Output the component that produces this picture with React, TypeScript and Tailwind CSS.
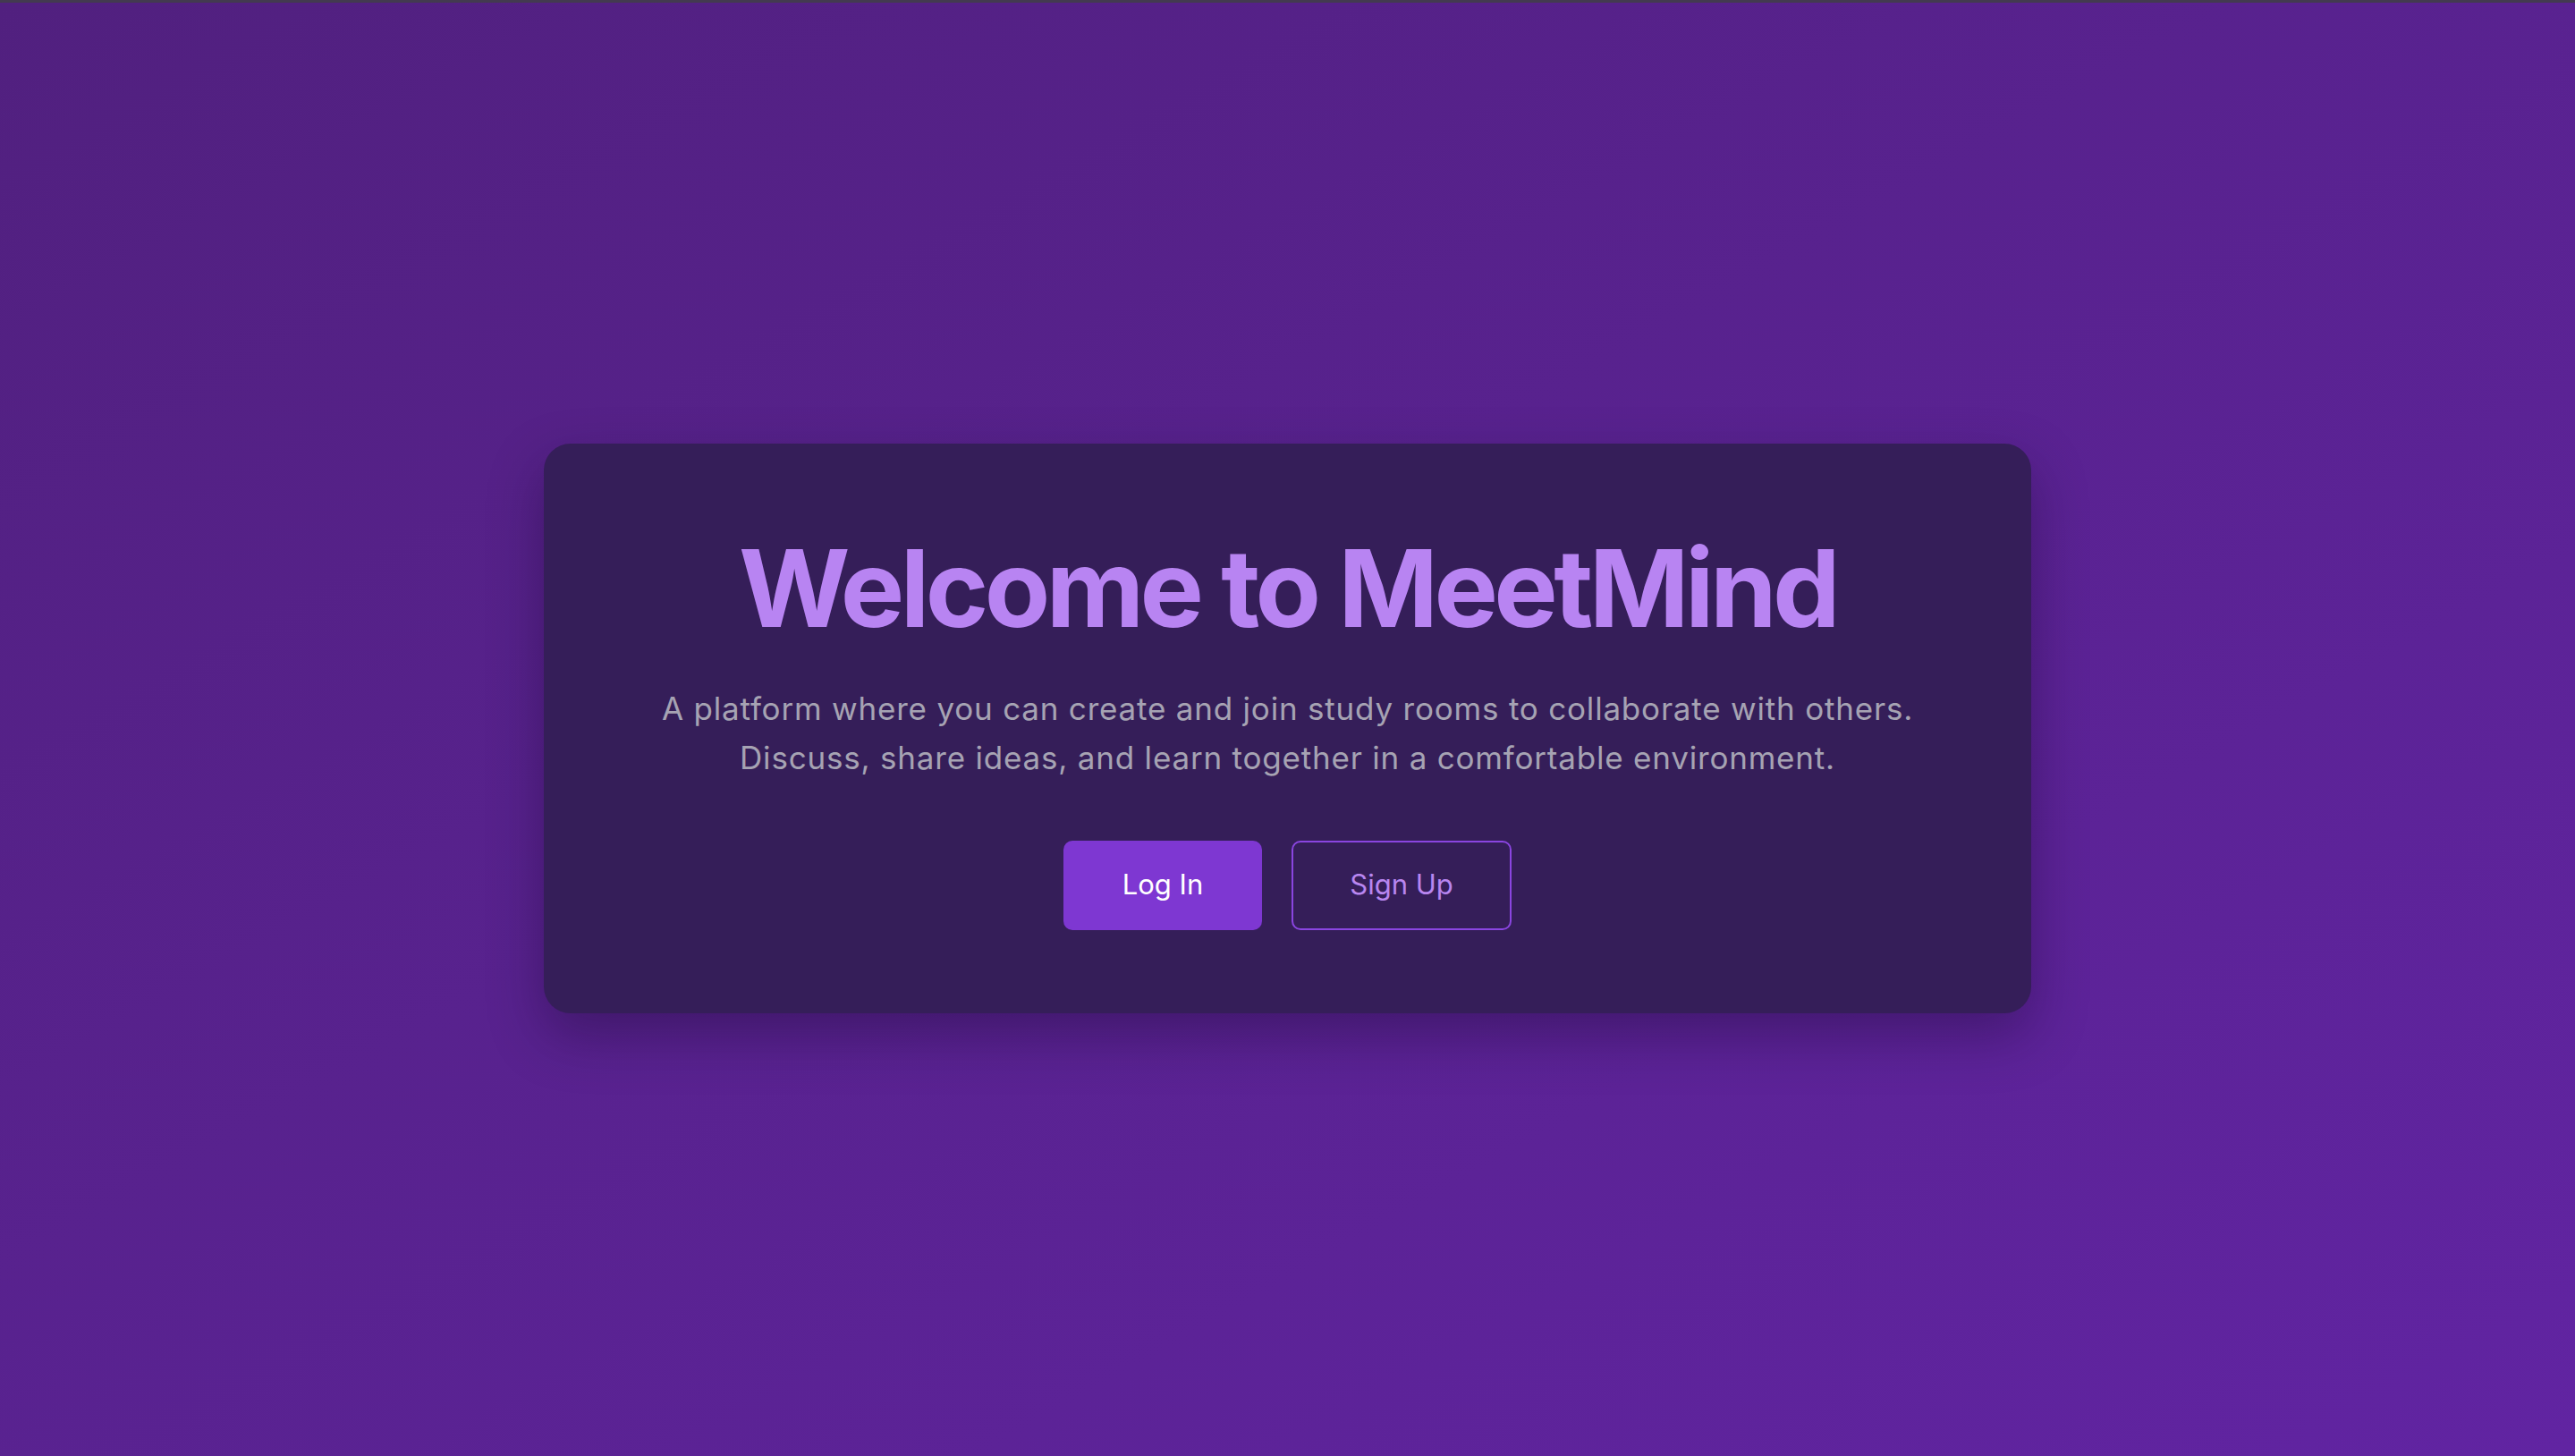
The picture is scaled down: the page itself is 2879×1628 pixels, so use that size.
import React from "react";

const App = () => {
    return (
        <div
            className="w-full h-[1628px] flex flex-col bg-gradient-to-br from-[#51207f] to-[#6124a2]"
            style={{ fontFamily: "Inter, 'Noto Sans', sans-serif" }}
        >
            <div className="h-[3px] bg-[#433a50]" />
            <div className="flex-1 flex items-center justify-center pb-[3px]">
                <div className="w-[1663px] rounded-[30px] bg-[#351e59] shadow-[0_25px_60px_rgba(20,5,40,0.35)] pt-[102px] pb-[93px] flex flex-col items-center text-center">
                    <h1 className="text-[120px] leading-none font-bold tracking-[-4.6px] text-[#b884f2]">
                        Welcome to MeetMind
                    </h1>
                    <p className="mt-[47px] text-[35px] leading-[55px] tracking-[0.8px] text-[#a6a3b3]">
                        A platform where you can create and join study rooms to collaborate with others.
                        <br />
                        Discuss, share ideas, and learn together in a comfortable environment.
                    </p>
                    <div className="mt-[65px] flex gap-[33px]">
                        <button className="h-[100px] w-[222px] rounded-[10px] bg-[#7e37d2] text-white text-[31px]">
                            Log In
                        </button>
                        <button className="h-[100px] w-[246px] rounded-[10px] border-2 border-[#8a45e0] text-[#b886f0] text-[31px]">
                            Sign Up
                        </button>
                    </div>
                </div>
            </div>
        </div>
    );
};

export default App;
